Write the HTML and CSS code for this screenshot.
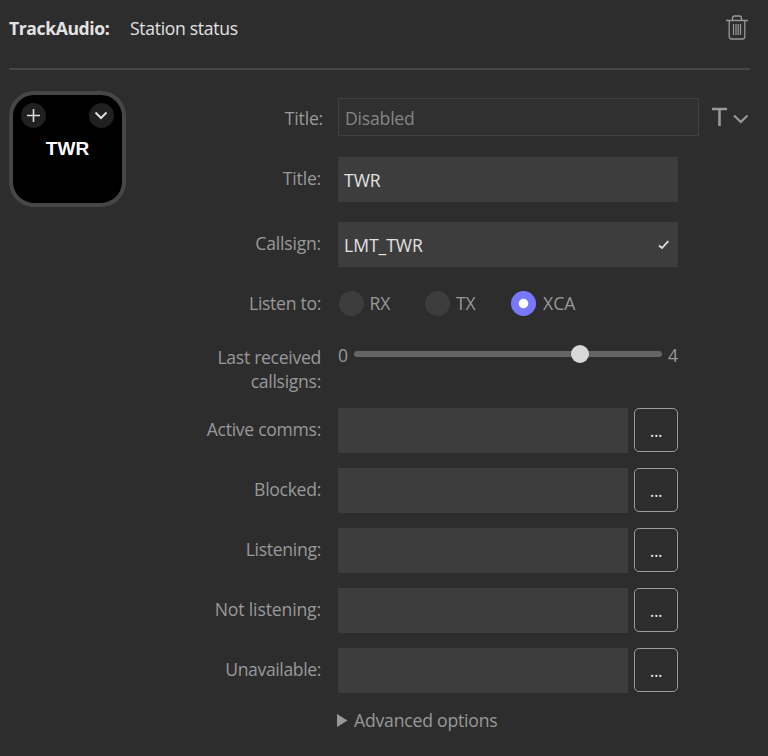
FILE: index.html
```html
<!DOCTYPE html>
<html lang="en">
<head>
<meta charset="utf-8">
<title>TrackAudio: Station status</title>
<link rel="stylesheet" href="styles.css">
</head>
<body>
<header class="header">
  <span class="plugin">TrackAudio:</span>
  <span class="action">Station status</span>
  <svg class="trash" width="24" height="26" viewBox="0 0 24 26" fill="none" stroke="#999" stroke-width="1.3">
    <path d="M1 6.500H23M7.500 6V4.200Q7.500 2 9.700 2h4.600Q16.500 2 16.500 4.200V6M4.200 6.500V22.500Q4.200 25 6.700 25H17.300Q19.800 25 19.800 22.500V6.500"/>
    <path stroke-width="1.2" d="M8.500 10V21M11 10V21M13.200 10V21M15.500 10V21"/>
  </svg>
</header>
<main class="main">
  <div class="key">
    <div class="key-controls">
      <span class="dot"><svg width="25" height="25" viewBox="0 0 25 25" fill="none" stroke="#ddd" stroke-width="1.6"><path d="M12.500 6V19M6 12.500H19"/></svg></span>
      <span class="dot"><svg width="25" height="25" viewBox="0 0 25 25" fill="none" stroke="#ddd" stroke-width="2"><path d="M6.500 9.500L12 15L17.500 9.500"/></svg></span>
    </div>
    <div class="key-title">TWR</div>
  </div>
  <form class="form">
    <div class="row native">
      <label class="label">Title:</label>
      <div class="box disabled"><span class="t-disabled">Disabled</span></div>
      <svg class="font-menu" width="38" height="24" viewBox="0 0 38 24" fill="none" stroke="#999">
        <path stroke-width="2.600" d="M1 4H16M8.500 4V21"/><path stroke-width="2.200" d="M23 10.500L29.800 17L36.500 10.500"/>
      </svg>
    </div>
    <div class="row title">
      <label class="label">Title:</label>
      <div class="box field"><span class="t-twr">TWR</span></div>
    </div>
    <div class="row callsign">
      <label class="label">Callsign:</label>
      <div class="box field"><span class="t-twr">LMT_TWR</span>
        <svg class="check" width="12" height="10" viewBox="0 0 12 10" fill="none" stroke="#e0e0e0" stroke-width="1.800"><path d="M1 5.500L4 8L10.300 1.200"/></svg>
      </div>
    </div>
    <div class="row listen">
      <label class="label t-tight">Listen to:</label>
      <div class="radios">
        <span class="option"><i class="radio"></i><span>RX</span></span>
        <span class="option"><i class="radio"></i><span>TX</span></span>
        <span class="option"><i class="radio checked"></i><span class="t-xca">XCA</span></span>
      </div>
    </div>
    <div class="row last">
      <label class="label two-line"><span class="t-tight">Last received</span><br><span class="t-tight">callsigns:</span></label>
      <div class="slider"><span class="end">0</span><div class="track"><i class="thumb"></i></div><span class="end">4</span></div>
    </div>
    <div class="row file">
      <label class="label t-tight">Active comms:</label><div class="box short"></div><button type="button" class="browse">...</button>
    </div>
    <div class="row file">
      <label class="label t-tight">Blocked:</label><div class="box short"></div><button type="button" class="browse">...</button>
    </div>
    <div class="row file">
      <label class="label t-tight">Listening:</label><div class="box short"></div><button type="button" class="browse">...</button>
    </div>
    <div class="row file">
      <label class="label t-not">Not listening:</label><div class="box short"></div><button type="button" class="browse">...</button>
    </div>
    <div class="row file">
      <label class="label t-un">Unavailable:</label><div class="box short"></div><button type="button" class="browse">...</button>
    </div>
    <div class="advanced"><svg width="11" height="13" viewBox="0 0 11 13" fill="#999"><path d="M0 0L10.500 6.500L0 13Z"/></svg><span>Advanced options</span></div>
  </form>
</main>
</body>
</html>
```
FILE: styles.css
```css
* { box-sizing: border-box; }
body {
  margin: 0;
  height: 756px;
  overflow: hidden;
  background: #2d2d2d;
  color: #999;
  font: 17.6px/24px "Open Sans", "Noto Sans", sans-serif;
  letter-spacing: -0.2px;
  white-space: nowrap;
}
.header {
  display: flex;
  align-items: flex-start;
  height: 70px;
  margin: 0 18px 0 9px;
  padding-top: 16px;
  border-bottom: 2px solid #464646;
  color: #e2e2e2;
}
.plugin { width: 121px; font-weight: 700; letter-spacing: -0.42px; }
.action { letter-spacing: -0.32px; }
.trash { margin: -2px 1px 0 auto; }
.main { display: flex; padding-left: 9px; }
.key {
  width: 117px;
  height: 116px;
  margin-top: 21px;
  padding: 8px 8px 0;
  border: 4px solid #464646;
  border-radius: 25px;
  background: #000;
}
.key-controls { display: flex; justify-content: space-between; }
.dot { height: 25px; border-radius: 50%; background: #202020; }
.key-title {
  margin-top: 9px;
  color: #fff;
  font: bold 19px/24px "Liberation Sans", sans-serif;
  letter-spacing: 0;
  text-align: center;
}
.form { width: 642px; padding-top: 28px; }
.row { display: flex; align-items: center; }
.label { width: 195px; margin-right: 17px; text-align: right; }
.box { display: flex; align-items: center; background: #3d3d3d; }
.native { height: 38px; margin-bottom: 21px; }
.native .label { width: 197px; margin-right: 15px; padding-top: 1px; }
.disabled {
  width: 361px;
  height: 38px;
  padding: 1px 0 0 6px;
  border: 1px solid #404040;
  background: #303030;
  color: #858585;
}
.font-menu { margin-left: 12px; }
.title, .callsign { margin-bottom: 20px; }
.title .label, .callsign .label, .file .label { padding-bottom: 3px; }
.field { width: 340px; height: 45px; padding: 1px 8px 0 6px; color: #e2e2e2; }
.check { margin-left: auto; }
.t-twr { letter-spacing: -0.05px; }
.t-tight { letter-spacing: -0.3px; }
.t-un { letter-spacing: -0.38px; }
.t-not { letter-spacing: -0.14px; }
.t-xca { margin-left: 1px; letter-spacing: 0; }
.listen { height: 32px; }
.radios { display: flex; align-items: center; }
.option { display: flex; align-items: center; width: 86px; }
.radio {
  width: 25px;
  height: 25px;
  margin: 0 6px 0 1px;
  border-radius: 50%;
  background: #3d3d3d;
}
.option:first-child .radio { margin: 0 6px 0 0.5px; }
.checked { background: radial-gradient(circle, #fff 4.2px, #7878ff 5.2px); }
.last { height: 89px; align-items: flex-start; }
.two-line { padding-top: 26px; }
.slider { display: flex; align-items: center; padding-top: 24px; }
.end { width: 10px; }
.track {
  display: flex;
  align-items: center;
  width: 308px;
  height: 6px;
  margin: -3px 6px 0;
  padding-left: 217px;
  border-radius: 3px;
  background: #656565;
}
.thumb { width: 18px; height: 18px; border-radius: 50%; background: #d8d8d8; }
.file { height: 45px; margin-bottom: 15px; }
.short { width: 290px; height: 45px; margin-right: 6px; }
.browse {
  align-self: flex-start;
  width: 44px;
  height: 44px;
  padding: 0 0 1px;
  border: 1px solid #999;
  border-radius: 5px;
  background: transparent;
  color: #e2e2e2;
  font: inherit;
  letter-spacing: -0.5px;
}
.advanced { display: flex; align-items: center; gap: 6px; margin-left: 211px; }
```
